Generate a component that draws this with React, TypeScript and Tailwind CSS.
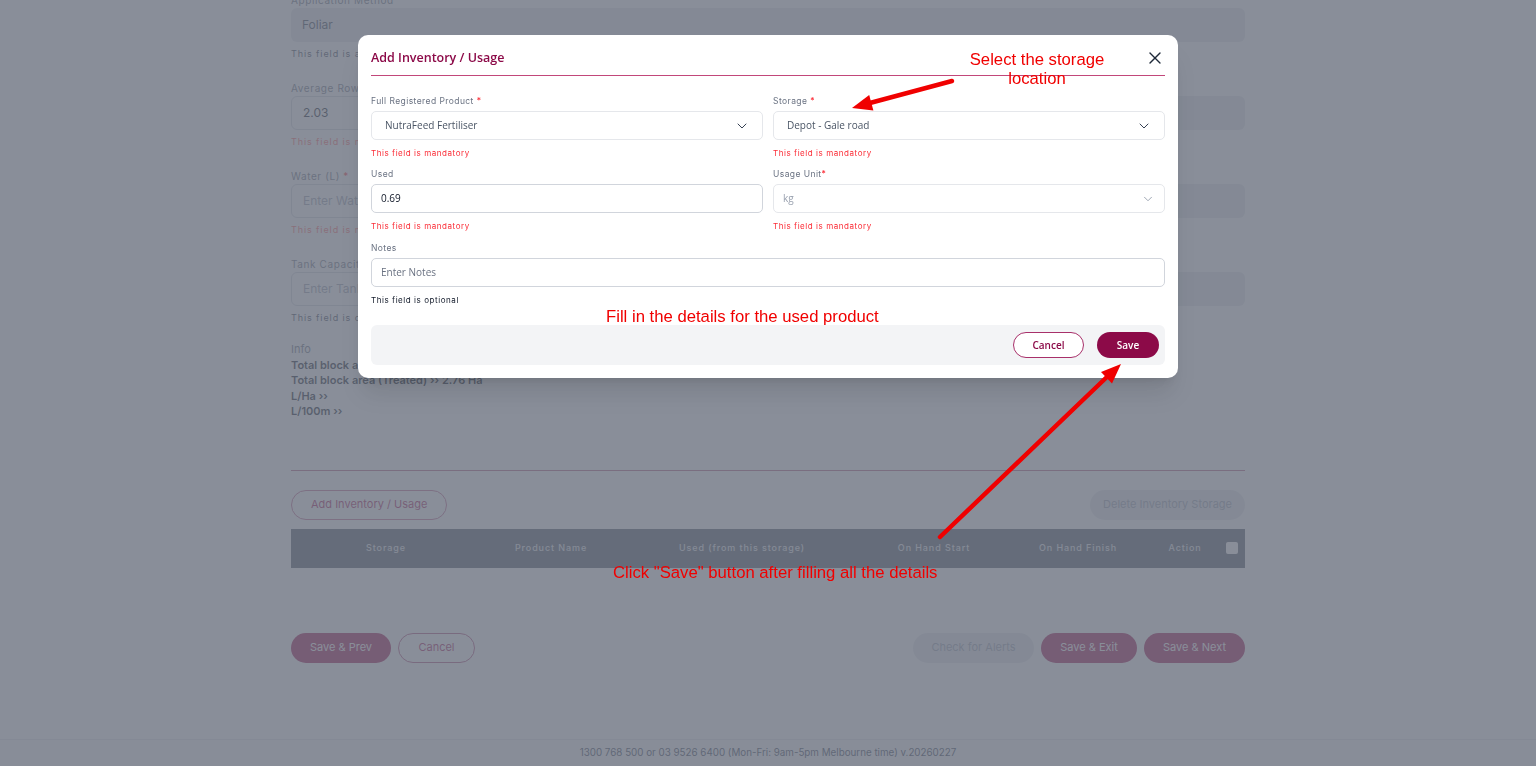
import { ChevronDown, X } from "lucide-react";

type BgFieldProps = {
  label?: string;
  required?: boolean;
  value?: string;
  placeholder?: string;
  hint?: string;
  hintTone?: "red" | "dark";
  disabled?: boolean;
  className?: string;
};

const BgField = ({ label, required, value, placeholder, hint, hintTone, disabled, className }: BgFieldProps) => (
  <div className={className}>
    <div className="h-[16px] text-[10px] leading-[16px] tracking-[0.06em] text-gray-500">
      {label}
      {required && <span className="text-red-500"> *</span>}
    </div>
    <div
      className={
        disabled
          ? "flex h-[34px] items-center rounded-md bg-[#e5e7eb] px-[11px] text-[12px] text-gray-700"
          : "flex h-[34px] items-center rounded-md border border-gray-300 bg-white px-[11px] text-[12px] text-gray-900"
      }
    >
      {value ? <span>{value}</span> : <span className="text-gray-400">{placeholder}</span>}
    </div>
    {hint && (
      <p
        className={
          hintTone === "red"
            ? "mt-[6px] text-[9px] leading-[12px] tracking-[0.1em] text-red-400"
            : "mt-[6px] text-[9px] leading-[12px] tracking-[0.1em] text-gray-700"
        }
      >
        {hint}
      </p>
    )}
  </div>
);

const ModalLabel = ({ text, required, tight }: { text: string; required?: boolean; tight?: boolean }) => (
  <div className="text-[8.5px] leading-[12px] tracking-[0.05em] text-gray-500">
    {text}
    {required && <span className="text-red-500">{tight ? "*" : " *"}</span>}
  </div>
);

const Mandatory = () => (
  <p className="mt-[7px] text-[8px] leading-[12px] tracking-[0.07em] text-red-500">This field is mandatory</p>
);

const BackgroundPage = () => (
  <div className="flex min-h-screen flex-col bg-white font-['Inter',sans-serif]">
    <div className="mx-auto w-[954px]">
      <div className="-mt-[8px] grid grid-cols-2 gap-x-4 gap-y-[20px]">
        <BgField
          className="col-span-2"
          label="Application Method"
          value="Foliar"
          disabled
          hint="This field is auto-calculated"
          hintTone="dark"
        />
        <BgField label="Average Row Spacing (m)" value="2.03" hint="This field is mandatory" hintTone="red" />
        <BgField disabled />
        <BgField label="Water (L)" required placeholder="Enter Water (L)" hint="This field is mandatory" hintTone="red" />
        <BgField disabled />
        <BgField label="Tank Capacity (L)" placeholder="Enter Tank Capacity (L)" hint="This field is optional" hintTone="dark" />
        <BgField disabled />
      </div>

      <div className="mt-[18px] text-[11px] leading-[15.5px]">
        <div className="text-gray-500">Info</div>
        <div className="font-semibold text-gray-900">Total block area ›› 3.12 Ha</div>
        <div className="font-semibold text-gray-900">Total block area (Treated) ›› 2.76 Ha</div>
        <div className="font-semibold text-gray-900">L/Ha ››</div>
        <div className="font-semibold text-gray-900">L/100m ››</div>
      </div>

      <div className="mt-[50px] border-t-[1.5px] border-[#b46280]" />

      <div className="mt-[19px] flex items-center justify-between">
        <button className="h-[30px] rounded-full border border-[#c06890] px-[19px] text-[11px] text-[#a8125c]">
          Add Inventory / Usage
        </button>
        <button className="h-[30px] rounded-full bg-[#e5e7eb] px-[13px] text-[11px] text-gray-400">
          Delete Inventory Storage
        </button>
      </div>

      <div className="mt-[9px] grid h-[39px] grid-cols-[190px_140px_242px_142px_146px_68px_26px] items-center bg-[#4b5563] text-center text-[9px] font-medium tracking-[0.1em] text-gray-200">
        <div>Storage</div>
        <div>Product Name</div>
        <div>Used (from this storage)</div>
        <div>On Hand Start</div>
        <div>On Hand Finish</div>
        <div>Action</div>
        <div className="flex justify-center">
          <span className="block h-[12px] w-[12px] rounded-[2px] bg-white" />
        </div>
      </div>

      <div className="mt-[65px] flex items-center justify-between text-[11px]">
        <div className="flex gap-[7px]">
          <button className="h-[30px] w-[100px] rounded-full bg-[#a00a4c] text-white">Save &amp; Prev</button>
          <button className="h-[30px] w-[77px] rounded-full border border-[#b0507e] text-[#a8125c]">Cancel</button>
        </div>
        <div className="flex gap-[7px]">
          <button className="h-[30px] w-[121px] rounded-full bg-[#e5e7eb] text-gray-400">Check for Alerts</button>
          <button className="h-[30px] w-[96px] rounded-full bg-[#a00a4c] text-white">Save &amp; Exit</button>
          <button className="h-[30px] w-[101px] rounded-full bg-[#a00a4c] text-white">Save &amp; Next</button>
        </div>
      </div>
    </div>

    <footer className="mt-auto flex h-[27px] items-center justify-center border-t border-gray-200 bg-gray-50 text-[9.8px] text-gray-700">
      1300 768 500 or 03 9526 6400 (Mon-Fri: 9am-5pm Melbourne time) v.20260227
    </footer>
  </div>
);

const InventoryModal = () => (
  <div className="fixed inset-0 flex items-start justify-center bg-[#6b7280]/80 pt-[35px]">
    <div className="w-[820px] rounded-[10px] bg-white px-[13px] pt-[14px] pb-[13px] font-['Inter',sans-serif] shadow-xl">
      <div className="flex h-[27px] items-start justify-between border-b border-[#c2477a]">
        <h2 className="font-['Open_Sans',sans-serif] text-[12.5px] leading-[18px] font-semibold text-[#8c0a48]">
          Add Inventory / Usage
        </h2>
        <X className="-mt-[1px] h-[20px] w-[20px] text-gray-800" strokeWidth={1.6} />
      </div>

      <div className="mt-[19px] grid grid-cols-2 gap-x-[10px] gap-y-[9px]">
        <div>
          <ModalLabel text="Full Registered Product" required />
          <div className="mt-[4px] flex h-[29px] items-center justify-between rounded-[5px] border border-gray-200 pr-[12px] pl-[13px] font-['Open_Sans',sans-serif] text-[10px] text-gray-600">
            <span>NutraFeed Fertiliser</span>
            <ChevronDown className="h-[16px] w-[16px] text-gray-700" strokeWidth={1.5} />
          </div>
          <Mandatory />
        </div>
        <div>
          <ModalLabel text="Storage" required />
          <div className="mt-[4px] flex h-[29px] items-center justify-between rounded-[5px] border border-gray-200 pr-[12px] pl-[13px] font-['Open_Sans',sans-serif] text-[10px] text-gray-600">
            <span>Depot - Gale road</span>
            <ChevronDown className="h-[16px] w-[16px] text-gray-700" strokeWidth={1.5} />
          </div>
          <Mandatory />
        </div>
        <div>
          <ModalLabel text="Used" />
          <div className="mt-[4px] flex h-[29px] items-center rounded-[5px] border border-gray-300 px-[9px] font-['Open_Sans',sans-serif] text-[10px] text-gray-900">
            0.69
          </div>
          <Mandatory />
        </div>
        <div>
          <ModalLabel text="Usage Unit" required tight />
          <div className="mt-[4px] flex h-[29px] items-center justify-between rounded-[5px] border border-gray-200 pr-[9px] pl-[9px] font-['Open_Sans',sans-serif] text-[10px] text-gray-400">
            <span>kg</span>
            <ChevronDown className="h-[14px] w-[14px] text-gray-400" strokeWidth={1.6} />
          </div>
          <Mandatory />
        </div>
      </div>

      <div className="mt-[10px]">
        <ModalLabel text="Notes" />
        <div className="mt-[4px] flex h-[29px] items-center rounded-[5px] border border-gray-300 px-[9px] font-['Open_Sans',sans-serif] text-[10px] text-gray-500">
          Enter Notes
        </div>
        <p className="mt-[7px] text-[8px] leading-[12px] tracking-[0.07em] text-gray-900">This field is optional</p>
      </div>

      <div className="mt-[19px] flex h-[40px] items-center justify-end gap-[13px] rounded-md bg-gray-100 pr-[6px] font-['Open_Sans',sans-serif] text-[10px] font-semibold">
        <button className="h-[26px] w-[71px] rounded-full border border-[#a8306a] bg-white text-[#8c0a48]">Cancel</button>
        <button className="h-[26px] w-[62px] rounded-full bg-[#8c0a48] text-white">Save</button>
      </div>
    </div>
  </div>
);

const Annotations = () => (
  <div className="pointer-events-none fixed inset-0 font-['Liberation_Sans',Arial,sans-serif] text-[16.7px] leading-[19px] text-[#f00000]">
    <div className="absolute top-[50px] left-[937px] w-[200px] text-center">
      Select the storage
      <br />
      location
    </div>
    <div className="absolute top-[307px] left-[606px] whitespace-nowrap">Fill in the details for the used product</div>
    <div className="absolute top-[563px] left-[613px] whitespace-nowrap">Click "Save" button after filling all the details</div>
    <svg className="absolute inset-0 h-full w-full" viewBox="0 0 1536 766">
      <line x1="952" y1="81" x2="868" y2="103.5" stroke="#f00000" strokeWidth="4.5" strokeLinecap="round" />
      <polygon points="852,108 869.2,95.1 873.4,110.5" fill="#f00000" />
      <line x1="940" y1="537" x2="1110" y2="374" stroke="#f00000" strokeWidth="4.5" strokeLinecap="round" />
      <polygon points="1121,364 1101,372 1112,383.6" fill="#f00000" />
    </svg>
  </div>
);

export default function App() {
  return (
    <div className="relative">
      <BackgroundPage />
      <InventoryModal />
      <Annotations />
    </div>
  );
}
